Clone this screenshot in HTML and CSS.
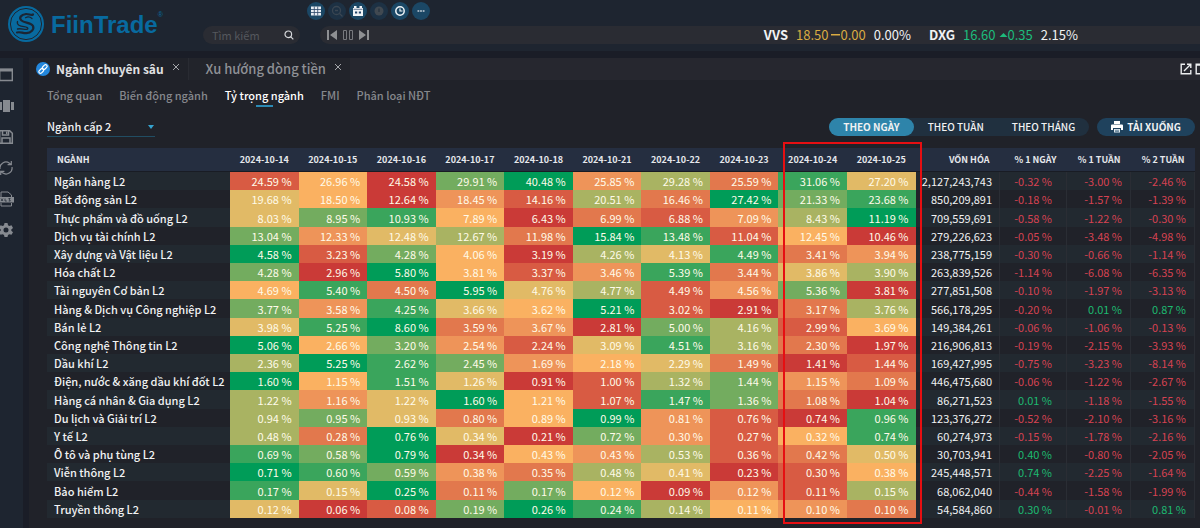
FILE: index.html
```html
<!DOCTYPE html>
<html lang="vi">
<head>
<meta charset="utf-8">
<meta name="viewport" content="width=device-width, initial-scale=1">
<title>FiinTrade</title>
<link rel="stylesheet" href="styles.css">
</head>
<body>
<header class="topbar">
  <a class="brand" href="#" aria-label="FiinTrade">
    <svg class="brand-mark" viewBox="0 0 36 36" aria-hidden="true">
      <circle cx="18" cy="18" r="18" fill="#086a9f"/>
      <circle cx="18" cy="18" r="15.6" fill="none" stroke="#1e2530" stroke-width="1"/>
      <g fill="none" stroke="#1b2634" stroke-linecap="round">
        <path d="M25 8.500c-2 1.500-4-.8-7-.5-5 .5-7.500 4-4.500 6.500s9.500 2 11.500 5.500c1.500 3.500-2 7-6.500 7.200-4 .2-6-1.700-9.500-.7" stroke-width="2.200"/>
        <path d="M24 12.500c-2-1.800-4.500-2-6.500-.8" stroke-width="1.200"/>
        <path d="M9.500 15.500c-1 3.500 2.500 4.800 6.500 5.200 3 .4 4.500 1.300 3.500 2.500-2.500 1-6-1.200-10-.2" stroke-width="1.300"/>
      </g>
    </svg>
    <span class="brand-name">FiinTrade</span><sup class="brand-reg">®</sup>
  </a>
  <label class="search">
    <input type="search" placeholder="Tìm kiếm" aria-label="Tìm kiếm">
    <svg viewBox="0 0 10 10" aria-hidden="true"><circle cx="4.300" cy="4.300" r="3.300"/><path d="M6.800 6.800 9.300 9.300"/></svg>
  </label>
  <div class="topbar-main">
    <div class="tools">
      <button class="tool" type="button" aria-label="Bảng"><svg viewBox="0 0 16 16"><path d="M3 3.500h10v9H3z" fill="#e8edf3"/><path d="M3 6.500h10M3 9.500h10M6.300 3.500v9M9.700 3.500v9" stroke="#2b4668" stroke-width=".8"/></svg></button>
      <button class="tool dim" type="button" aria-label="Tìm" disabled><svg viewBox="0 0 16 16" fill="none" stroke="#3a4652" stroke-width="1.300"><circle cx="7.500" cy="7.500" r="4"/><path d="m10.500 10.500 3 3M6 7.500h3"/></svg></button>
      <button class="tool" type="button" aria-label="Lịch"><svg viewBox="0 0 16 16"><path d="M4 3h2.500v2h3V3H12v2h1v8H3V5h1z" fill="#f0f3f6"/><path d="M3.500 6.300h9" stroke="#2b4668" stroke-width=".7"/><path d="M5 8.500h2.200v2H5zM8.800 8.500H11v2H8.800z" fill="#24466a"/></svg></button>
      <button class="tool dim" type="button" aria-label="Cảnh báo" disabled><svg viewBox="0 0 16 16"><circle cx="8" cy="8" r="4.500" fill="#414951"/><path d="M8 5.500V9" stroke="#27333f" stroke-width="1.300"/></svg></button>
      <button class="tool" type="button" aria-label="Lịch sử"><svg viewBox="0 0 16 16" fill="none" stroke="#eef3f7" stroke-width="1.500"><circle cx="8" cy="8" r="4.200"/><path d="M8 5.500V8h2.500" stroke-width="1.200"/></svg></button>
      <button class="tool" type="button" aria-label="Thêm"><svg viewBox="0 0 16 16" fill="#c6d0d9"><path d="M4.500 7.300h1.800v1.400H4.500zM7.100 7.300h1.800v1.400H7.100zM9.700 7.300h1.800v1.400H9.700z"/></svg></button>
    </div>
    <div class="ticker">
      <div class="player">
        <button type="button" aria-label="Trước"><svg viewBox="0 0 10 12" fill="#8e9093"><path d="M0 1h2v10H0zM10 1v10L3 6z"/></svg></button>
        <button type="button" aria-label="Tạm dừng"><svg viewBox="0 0 10 12" fill="none" stroke="#77797e"><path d="M.5 1.500h3v9h-3zM6.500 1.500h3v9h-3z"/></svg></button>
        <button type="button" aria-label="Sau"><svg viewBox="0 0 10 12" fill="#8e9093"><path d="M8 1h2v10H8zM0 1v10l7-5z"/></svg></button>
      </div>
      <div class="quotes">
        <p class="quote"><b>VVS</b><span class="flat">18.50</span><span class="flat change"><svg viewBox="0 0 9 4" fill="#d9ab42"><path d="M0 1h9v1.500H0z"/></svg>0.00</span><span>0.00%</span></p>
        <p class="quote"><b>DXG</b><span class="up">16.60</span><span class="up change"><svg viewBox="0 0 9 4" fill="#1dbb7c"><path d="M.5 4 4.500 0l4 4z"/></svg>0.35</span><span>2.15%</span></p>
      </div>
    </div>
  </div>
</header>
<div class="workspace">
  <nav class="rail" aria-label="Công cụ">
    <button type="button" aria-label="Cửa sổ"><svg viewBox="0 0 16 16"><path d="M1.700 2.500h12.600v11H1.700z" fill="none" stroke="#868a90" stroke-width="1.400"/><path d="M1 1.500h14v3H1z"/></svg></button>
    <button type="button" aria-label="Bố cục"><svg viewBox="0 0 16 16"><path d="M5 2h7v12H5zM0 4h4v8H0zM13 4h3v8h-3z"/></svg></button>
    <button type="button" aria-label="Lưu"><svg viewBox="0 0 16 16"><g fill="none" stroke="#868a90" stroke-width="1.500"><path d="M1.700 1.700h10l2.600 2.600v10H1.700zM4.500 2v4h6V2M4 14V9h8v5"/><path d="M8.700 2.500v2.500"/></g></svg></button>
    <button type="button" aria-label="Làm mới"><svg viewBox="0 0 16 16"><path d="M2 9a6 6 0 0 1 9.500-5.800L13 4.500M14 7a6 6 0 0 1-9.500 5.800L3 11.500M13.300 1v3.700H9.600M2.700 15v-3.700h3.700" fill="none" stroke="#868a90" stroke-width="1.200"/></svg></button>
    <button type="button" aria-label="Xuất tệp"><svg viewBox="0 0 16 16"><path d="M3 6V1h7l3.500 3v2M3 12v3h10.500v-3" fill="none" stroke="#868a90"/><path d="M0 6h16v5.500H0z"/><path d="m3 7.500 2 2.500m0-2.500L3 10M7 7.500V10h1.800M12.500 7.500h-1.700l1.500 2.500h-1.600" fill="none" stroke="#222a35" stroke-width=".8"/></svg></button>
    <button type="button" aria-label="Cài đặt"><svg viewBox="0 0 16 16"><path fill-rule="evenodd" d="M6.500 1h3l.5 2.200 1.300.8 2.200-.7 1.500 2.600-1.700 1.600v1.200l1.700 1.500-1.500 2.600-2.200-.6-1.300.7L9.500 15h-3L6 12.900l-1.300-.7-2.200.6L1 10.200l1.700-1.500V7.500L1 5.900l1.500-2.600 2.200.7L6 3.200zM8 5.500a2.500 2.500 0 1 0 0 5 2.500 2.500 0 0 0 0-5z"/></svg></button>
  </nav>
  <main class="panel">
    <div class="tabs">
      <div class="tab active">
        <svg class="link-icon" viewBox="0 0 14 14" aria-hidden="true"><circle cx="7" cy="7" r="7" fill="#2387dc"/><g fill="none" stroke="#fff" stroke-width="1.200"><rect x="6" y="3.500" width="5.500" height="3.200" rx="1.600" transform="rotate(-45 8.700 5.100)"/><rect x="2.500" y="7.300" width="5.500" height="3.200" rx="1.600" transform="rotate(-45 5.300 8.900)"/></g></svg>
        <a href="#">Ngành chuyên sâu</a>
        <button class="close" type="button" aria-label="Đóng"><svg viewBox="0 0 8 8"><path d="m1 1 6 6M7 1 1 7"/></svg></button>
      </div>
      <div class="tab">
        <a href="#">Xu hướng dòng tiền</a>
        <button class="close" type="button" aria-label="Đóng"><svg viewBox="0 0 8 8"><path d="m1 1 6 6M7 1 1 7"/></svg></button>
      </div>
      <div class="window-actions">
        <button type="button" aria-label="Mở rộng"><svg viewBox="0 0 12 12" fill="none" stroke="#eceef0" stroke-width="1.400"><path d="M5 1.200H1.200v9.600h9.600V7M7 1.200h3.800V5M10.500 1.500 4 8"/></svg></button>
        <button type="button" aria-label="Phóng to"><svg viewBox="0 0 12 12" fill="none" stroke="#eceef0" stroke-width="1.400"><path d="M1.200 1.200h9.600v9.600H1.200zM1 2h10"/></svg></button>
      </div>
    </div>
    <nav class="subnav">
      <a href="#">Tổng quan</a>
      <a href="#">Biến động ngành</a>
      <a href="#" class="current" aria-current="page">Tỷ trọng ngành</a>
      <a href="#">FMI</a>
      <a href="#">Phân loại NĐT</a>
    </nav>
    <div class="filters">
      <div class="level"><select aria-label="Cấp ngành"><option>Ngành cấp 2</option></select></div>
      <div class="period">
        <button type="button" class="on" aria-pressed="true">THEO NGÀY</button>
        <button type="button" aria-pressed="false">THEO TUẦN</button>
        <button type="button" aria-pressed="false">THEO THÁNG</button>
      </div>
      <button type="button" class="download"><svg viewBox="0 0 12 12" aria-hidden="true"><path d="M3 0h6v3H3zM1 3.500h10q1 0 1 1V9h-2V7H2v2H0V4.500q0-1 1-1z" fill="#fff"/><path d="M3 8h6v3.500H3z" fill="#dfe8ee"/><path d="M4 9.300h4M4 10.500h4" stroke="#27506f" stroke-width=".6"/></svg>TẢI XUỐNG</button>
    </div>
    <div class="grid-wrap">
      <table class="weights">
        <colgroup>
          <col class="col-name">
          <col span="10">
          <col class="col-cap">
          <col class="col-day">
          <col class="col-week" span="2">
        </colgroup>
        <thead><tr id="head"></tr></thead>
        <tbody id="rows"></tbody>
      </table>
      <div class="highlight"></div>
    </div>
  </main>
</div>
<script src="app.js"></script>
</body>
</html>
```
FILE: styles.css
```css
* { box-sizing: border-box; }
body {
  margin: 0;
  min-height: 100vh;
  display: flex;
  flex-direction: column;
  overflow: hidden;
  background: #1a1d27;
  color: #f1f2f3;
  font: 11px/16px "Noto Sans CJK SC", "Noto Sans", sans-serif;
}
button, input, select { font: inherit; color: inherit; border: 0; padding: 0; margin: 0; background: none; }
a { color: inherit; text-decoration: none; }
p { margin: 0; }
svg { display: block; }

.topbar { display: flex; align-items: stretch; height: 51px; background: #1e2530; }
.brand { display: flex; align-items: flex-start; width: 203px; padding: 6px 0 0 8px; color: #086a9f; }
.brand-mark { width: 36px; height: 36px; }
.brand-name { margin: 5px 0 0 7px; font: bold 24px/28px "Liberation Sans", Arial, sans-serif; }
.brand-reg { margin-top: 4px; font: 7px/10px "Liberation Sans", Arial, sans-serif; }
.search {
  display: flex; align-items: center; align-self: flex-end;
  width: 97px; height: 18px; margin-bottom: 7px; padding: 0 6px 0 9px;
  border-radius: 9px; background: #2a2c33;
}
.search input { flex: 1; min-width: 0; height: 18px; outline: 0; appearance: none; }
.search input::placeholder { color: #55585e; opacity: 1; }
.search svg { width: 10px; height: 10px; fill: none; stroke: #d5d7da; stroke-width: 1.2; }
.topbar-main { flex: 1; display: flex; flex-direction: column; justify-content: space-between; padding: 2px 0 7px; }
.tools { display: flex; gap: 3px; padding-left: 7px; }
.tool { width: 18px; height: 18px; padding: 1px; border-radius: 50%; background: #1b4765; }
.tool.dim { background: #1d3144; }
.ticker {
  display: flex; align-items: center; justify-content: space-between;
  height: 18px; margin-left: 20px; padding: 0 122px 0 7px;
  border-radius: 9px 0 0 9px; background: #2a2c33;
}
.player { display: flex; gap: 6px; }
.player svg { width: 10px; height: 12px; }
.quotes { display: flex; gap: 18px; }
.quote { display: flex; gap: 8px; font-size: 13px; line-height: 18px; }
.change { display: flex; align-items: center; margin-left: -5px; }
.change svg { width: 9px; height: 4px; }
.flat { color: #d9ab42; }
.up { color: #1dbb7c; }

.workspace { flex: 1; display: flex; gap: 6px; margin-top: 7px; }
.rail { display: flex; flex-direction: column; gap: 15px; width: 23px; padding-top: 9px; background: #1e2530; }
.rail button { width: 16px; height: 16px; margin-left: -2px; }
.rail svg { width: 16px; height: 16px; fill: #868a90; }

.panel { flex: 1; min-width: 0; display: flex; flex-direction: column; background: #202229; }
.tabs { display: flex; height: 22px; background: #26272f; }
.tab { display: flex; align-items: center; background: #22242b; color: #8f9196; font-size: 12px; font-weight: bold; padding: 0 8px 0 17px; }
.tab.active { padding: 0 8px 0 7px; background: #202229; color: #e0e1e3; }
.tab + .tab { border-left: 1px solid #292b32; font-weight: 500; font-size: 13px; }
.link-icon { width: 14px; height: 14px; margin-right: 6px; }
.close { width: 8px; height: 8px; margin: 0 0 4px 8px; }
.close svg { width: 8px; height: 8px; fill: none; stroke: #a4a6aa; stroke-width: 1; }
.window-actions { display: flex; align-items: center; gap: 3px; margin: 0 -7px 0 auto; }
.window-actions svg { width: 12px; height: 12px; }

.subnav { display: flex; gap: 17px; padding: 7px 18px 0; color: #86888d; font-weight: 500; }
.subnav a { position: relative; height: 20px; }
.subnav .current { color: #fff; }
.subnav .current::after { content: ""; position: absolute; left: 50%; bottom: 0; width: 17px; height: 2px; margin-left: -8px; background: #2c8ab4; }

.filters { display: flex; align-items: center; padding: 10px 5px 0 18px; }
.level { position: relative; width: 108px; height: 20px; border-bottom: 1px solid #214d63; }
.level::after { content: ""; position: absolute; right: 1px; top: 8px; border: 3px solid transparent; border-top: 4px solid #35a3cf; }
.level select { display: block; width: 100%; height: 18px; appearance: none; outline: 0; font-weight: 500; color: #f1f2f3; }
.period { display: flex; margin-left: auto; border-radius: 9px; background: #20303f; }
.period button { height: 18px; padding: 0 14px; border-radius: 9px; font-size: 10px; font-weight: 500; }
.period .on { background: #2e84aa; font-weight: bold; }
.download { display: flex; align-items: center; gap: 4px; height: 18px; margin-left: 8px; padding: 0 14px; border-radius: 9px; background: #1f425d; font-size: 10px; font-weight: bold; }
.download svg { width: 12px; height: 12px; }

.grid-wrap { position: relative; margin: 11px 5px 10px 18px; }
.weights { width: 100%; height: 370px; table-layout: fixed; border-collapse: collapse; }
.col-name { width: 183px; }
.col-cap { width: 84px; }
.col-day { width: 67px; }
.col-week { width: 64px; }
.weights th, .weights td { padding: 0; white-space: nowrap; }
.weights thead th { height: 24px; background: #252e40; box-shadow: inset 0 -1px #191c24; font-size: 9px; text-align: center; color: #e6e8ec; }
.weights thead th:first-child { padding-left: 10px; text-align: left; }
.weights thead .figure { padding-right: 10px; text-align: right; }
.weights tbody th { padding-left: 7px; text-align: left; font-weight: 500; }
.weights tbody tr:nth-child(odd) { background: #222930; }
.weights tbody td { text-align: right; line-height: 16px; }
.weights td.heat { padding-right: 7px; color: #fffbe9; }
.weights td.cap { padding-right: 7px; }
.weights td.cap, .weights td.move { border-right: 1px solid #2a2d34; }
.weights td.move { padding-right: 8px; }
.weights td.cap + td.move { padding-right: 14px; }
.weights td.gain { color: #1dba70; }
.weights td.loss { color: #d64252; }
.rank-0 { background: #009c58; }
.rank-1 { background: #3aa55c; }
.rank-2 { background: #73ac5f; }
.rank-3 { background: #a9b362; }
.rank-4 { background: #e1ba66; }
.rank-5 { background: #fab161; }
.rank-6 { background: #ee9459; }
.rank-7 { background: #e2784d; }
.rank-8 { background: #d85b43; }
.rank-9 { background: #ca3a37; }
.highlight { position: absolute; top: -6px; bottom: -6px; right: 273px; width: 139px; border: 2px solid #e60f12; pointer-events: none; }
```
FILE: app.js
```javascript
const dates = ["14", "15", "16", "17", "18", "21", "22", "23", "24", "25"].map(d => "2024-10-" + d);

// name, ten daily weights (%), market cap, change over 1 day / 1 week / 2 weeks (%)
const sectors = [
  ["Ngân hàng L2", [24.59, 26.96, 24.58, 29.91, 40.48, 25.85, 29.28, 25.59, 31.06, 27.20], 2127243743, [-0.32, -3.00, -2.46]],
  ["Bất động sản L2", [19.68, 18.50, 12.64, 18.45, 14.16, 20.51, 16.46, 27.42, 21.33, 23.68], 850209891, [-0.18, -1.57, -1.39]],
  ["Thực phẩm và đồ uống L2", [8.03, 8.95, 10.93, 7.89, 6.43, 6.99, 6.88, 7.09, 8.43, 11.19], 709559691, [-0.58, -1.22, -0.30]],
  ["Dịch vụ tài chính L2", [13.04, 12.33, 12.48, 12.67, 11.98, 15.84, 13.48, 11.04, 12.45, 10.46], 279226623, [-0.05, -3.48, -4.98]],
  ["Xây dựng và Vật liệu L2", [4.58, 3.23, 4.28, 4.06, 3.19, 4.26, 4.13, 4.49, 3.41, 3.94], 238775159, [-0.30, -0.66, -1.14]],
  ["Hóa chất L2", [4.28, 2.96, 5.80, 3.81, 3.37, 3.46, 5.39, 3.44, 3.86, 3.90], 263839526, [-1.14, -6.08, -6.35]],
  ["Tài nguyên Cơ bản L2", [4.69, 5.40, 4.50, 5.95, 4.76, 4.77, 4.49, 4.56, 5.36, 3.81], 277851508, [-0.10, -1.97, -3.13]],
  ["Hàng & Dịch vụ Công nghiệp L2", [3.77, 3.58, 4.25, 3.66, 3.62, 5.21, 3.02, 2.91, 3.17, 3.76], 566178295, [-0.20, 0.01, 0.87]],
  ["Bán lẻ L2", [3.98, 5.25, 8.60, 3.59, 3.67, 2.81, 5.00, 4.16, 2.99, 3.69], 149384261, [-0.06, -1.06, -0.13]],
  ["Công nghệ Thông tin L2", [5.06, 2.66, 3.20, 2.54, 2.24, 3.09, 4.51, 3.16, 2.30, 1.97], 216906813, [-0.19, -2.15, -3.93]],
  ["Dầu khí L2", [2.36, 5.25, 2.62, 2.45, 1.69, 2.18, 2.29, 1.49, 1.41, 1.44], 169427995, [-0.75, -3.23, -8.14]],
  ["Điện, nước & xăng dầu khí đốt L2", [1.60, 1.15, 1.51, 1.26, 0.91, 1.00, 1.32, 1.44, 1.15, 1.09], 446475680, [-0.06, -1.22, -2.67]],
  ["Hàng cá nhân & Gia dụng L2", [1.22, 1.16, 1.22, 1.60, 1.21, 1.07, 1.47, 1.36, 1.08, 1.04], 86271523, [0.01, -1.18, -1.55]],
  ["Du lịch và Giải trí L2", [0.94, 0.95, 0.93, 0.80, 0.89, 0.99, 0.81, 0.76, 0.74, 0.96], 123376272, [-0.52, -2.10, -3.16]],
  ["Y tế L2", [0.48, 0.28, 0.76, 0.34, 0.21, 0.72, 0.30, 0.27, 0.32, 0.74], 60274973, [-0.15, -1.78, -2.16]],
  ["Ô tô và phụ tùng L2", [0.69, 0.58, 0.79, 0.34, 0.43, 0.43, 0.53, 0.36, 0.42, 0.50], 30703941, [0.40, -0.80, -2.05]],
  ["Viễn thông L2", [0.71, 0.60, 0.59, 0.38, 0.35, 0.48, 0.41, 0.23, 0.30, 0.384], 245448571, [0.74, -2.25, -1.64]],
  ["Bảo hiểm L2", [0.17, 0.15, 0.25, 0.11, 0.17, 0.12, 0.09, 0.12, 0.11, 0.154], 68062040, [-0.44, -1.58, -1.99]],
  ["Truyền thông L2", [0.12, 0.06, 0.08, 0.19, 0.26, 0.24, 0.14, 0.11, 0.10, 0.10], 54584860, [0.30, -0.01, 0.81]]
];

function cell(tag, text, className) {
  const el = document.createElement(tag);
  el.textContent = text;
  if (className) el.className = className;
  if (tag === "th") el.scope = className === "sector" ? "row" : "col";
  return el;
}

const percent = value => value.toFixed(2) + " %";

document.getElementById("head").append(
  cell("th", "NGÀNH"),
  ...dates.map(date => cell("th", date)),
  ...["VỐN HÓA", "% 1 NGÀY", "% 1 TUẦN", "% 2 TUẦN"].map(label => cell("th", label, "figure"))
);

for (const [name, weights, cap, moves] of sectors) {
  // Each row is coloured by rank: the largest weight is greenest.
  const order = weights.map((_, i) => i).sort((a, b) => weights[b] - weights[a]);
  const row = document.createElement("tr");
  row.append(
    cell("th", name, "sector"),
    ...weights.map((w, i) => cell("td", percent(w), "heat rank-" + order.indexOf(i))),
    cell("td", cap.toLocaleString("en-US"), "cap"),
    ...moves.map(m => cell("td", percent(m), "move " + (m < 0 ? "loss" : "gain")))
  );
  document.getElementById("rows").append(row);
}
```
